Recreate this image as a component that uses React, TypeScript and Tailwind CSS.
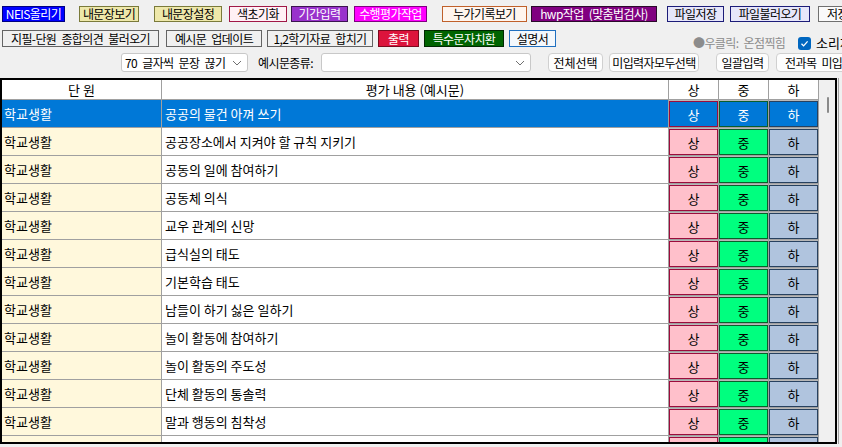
import React from "react";

const units = [
  "공공의 물건 아껴 쓰기",
  "공공장소에서 지켜야 할 규칙 지키기",
  "공동의 일에 참여하기",
  "공동체 의식",
  "교우 관계의 신망",
  "급식실의 태도",
  "기본학습 태도",
  "남들이 하기 싫은 일하기",
  "놀이 활동에 참여하기",
  "놀이 활동의 주도성",
  "단체 활동의 통솔력",
  "말과 행동의 침착성",
  "모둠 활동의 협동성",
];

function Btn({ className, children }: { className: string; children: React.ReactNode }) {
  return (
    <div
      className={`shrink-0 flex items-center justify-center whitespace-nowrap overflow-hidden border leading-none ${className}`}
    >
      {children}
    </div>
  );
}

function Chevron() {
  return (
    <svg width="10" height="6" viewBox="0 0 10 6" className="shrink-0">
      <path d="M1 1 L5 5 L9 1" fill="none" stroke="#707070" strokeWidth="1" />
    </svg>
  );
}

function GradeCell({ label, selected, tone }: { label: string; selected: boolean; tone: "hi" | "mid" | "lo" }) {
  const base =
    tone === "hi"
      ? selected
        ? "bg-[#0078d7] border-[#9c0c3c] text-white"
        : "bg-[#ffc0cb] border-[#9c0c3c] text-black"
      : tone === "mid"
        ? selected
          ? "bg-[#0078d7] border-[#0b5e2b] text-white"
          : "bg-[#00ff7f] border-[#0b5e2b] text-black"
        : selected
          ? "bg-[#0078d7] border-[#27415f] text-white"
          : "bg-[#b0c4de] border-[#27415f] text-black";
  return (
    <div className="w-[50px] h-full shrink-0 border-r border-[#a0a0a0] bg-[#b8b8b8] pt-[1px]">
      <div className={`w-[49px] h-[26px] border flex items-center justify-center ${base}`}>{label}</div>
    </div>
  );
}

export default function App() {
  return (
    <div className="w-[842px] h-[447px] overflow-hidden bg-[#f0f0f0] font-['Noto_Sans_CJK_KR','Noto_Sans',sans-serif] text-black">
      {/* toolbar row 1 */}
      <div className="flex h-[22px] pt-[6px] text-[12px] tracking-[-0.6px] [word-spacing:3px]">
        <Btn className="ml-[2px] w-[63px] h-[16px] bg-[#0000ff] border-[#000080] text-white">NEIS올리기</Btn>
        <Btn className="ml-[14px] w-[60px] h-[16px] bg-[#eee8aa] border-[#7a7a3a]">내문장보기</Btn>
        <Btn className="ml-[15px] w-[68px] h-[16px] bg-[#eee8aa] border-[#7a7a3a]">내문장설정</Btn>
        <Btn className="ml-[7px] w-[58px] h-[16px] bg-[#fff0f5] border-[#a01846]">색초기화</Btn>
        <Btn className="ml-[4px] w-[57px] h-[16px] bg-[#9932cc] border-[#3c1450] text-white">기간입력</Btn>
        <Btn className="ml-[6px] w-[73px] h-[16px] bg-[#ff00ff] border-[#800080] text-white">수행평가작업</Btn>
        <Btn className="ml-[15px] w-[85px] h-[16px] bg-[#fff5ee] border-[#c0602a]">누가기록보기</Btn>
        <Btn className="ml-[4px] w-[126px] h-[16px] bg-[#800080] border-[#2a0a2a] text-white">hwp작업 (맞춤법검사)</Btn>
        <Btn className="ml-[10px] w-[57px] h-[16px] bg-[#e6e6fa] border-[#1c1c78]">파일저장</Btn>
        <Btn className="ml-[6px] w-[80px] h-[16px] bg-[#e6e6fa] border-[#1c1c78]">파일불러오기</Btn>
        <Btn className="ml-[8px] w-[60px] h-[16px] bg-[#fafafa] border-[#707070] justify-start pl-[8px]">저장하기</Btn>
      </div>

      {/* toolbar row 2 */}
      <div className="flex mt-[8px] h-[23px] items-start text-[12px] tracking-[-0.6px] [word-spacing:3px]">
        <Btn className="ml-[2px] w-[157px] h-[17px] bg-[#f0f0f0] border-[#646464]">지필-단원 종합의견 불러오기</Btn>
        <Btn className="ml-[7px] w-[96px] h-[17px] bg-[#f0f0f0] border-[#646464]">예시문 업데이트</Btn>
        <Btn className="ml-[5px] w-[106px] h-[17px] bg-[#f0f0f0] border-[#646464]">1,2학기자료 합치기</Btn>
        <Btn className="ml-[5px] w-[41px] h-[17px] bg-[#dc143c] border-[#7a0a1e] text-white">출력</Btn>
        <Btn className="ml-[5px] w-[80px] h-[17px] bg-[#006400] border-[#002800] text-white">특수문자치환</Btn>
        <Btn className="ml-[5px] w-[47px] h-[17px] bg-[#f4f8fc] border-[#2070c0]">설명서</Btn>
        <div className="ml-[137px] mt-[6px] w-[105px] shrink-0 whitespace-nowrap text-[12px] leading-[14px] text-[#8c8c8c]">
          ●우클릭: 온점찍힘
        </div>
        <div className="mt-[7px] w-[13px] h-[13px] shrink-0 rounded-[3px] bg-[#0067c0] flex items-center justify-center">
          <svg width="11" height="11" viewBox="0 0 11 11">
            <path d="M2.5 5.8 L4.6 7.9 L8.6 3.4" fill="none" stroke="#ffffff" strokeWidth="1.3" />
          </svg>
        </div>
        <div className="ml-[5px] mt-[5px] shrink-0 whitespace-nowrap text-[13px] tracking-normal leading-[16px]">소리재생</div>
      </div>

      {/* toolbar row 3 */}
      <div className="flex h-[19px] items-start text-[12px] tracking-[-0.6px] [word-spacing:3px]">
        <div className="ml-[121px] w-[127px] h-[19px] shrink-0 bg-white border border-[#c8c8c8] rounded-[3px] flex items-center justify-between pl-[3px] pr-[5px] whitespace-nowrap leading-none">
          <span>70 글자씩 문장 끊기</span>
          <Chevron />
        </div>
        <div className="ml-[10px] w-[58px] h-[19px] shrink-0 flex items-center whitespace-nowrap leading-none">예시문종류:</div>
        <div className="ml-[5px] w-[210px] h-[19px] shrink-0 bg-white border border-[#c8c8c8] rounded-[3px] flex items-center justify-end pr-[5px]">
          <Chevron />
        </div>
        <Btn className="ml-[17px] w-[55px] h-[19px] rounded-[4px] bg-[#fdfdfd] border-[#d0d0d0] tracking-normal">전체선택</Btn>
        <Btn className="ml-[6px] w-[90px] h-[19px] rounded-[4px] bg-[#fdfdfd] border-[#d0d0d0]">미입력자모두선택</Btn>
        <Btn className="ml-[17px] w-[53px] h-[19px] rounded-[4px] bg-[#fdfdfd] border-[#d0d0d0]">일괄입력</Btn>
        <Btn className="ml-[7px] w-[80px] h-[19px] rounded-[4px] bg-[#fdfdfd] border-[#d0d0d0] justify-start pl-[8px]">전과목 미입력</Btn>
      </div>

      {/* grid */}
      <div className="flex mt-[6px] items-start">
        <div className="w-[837px] h-[366px] shrink-0 border-2 border-black flex overflow-hidden bg-white">
          <div className="w-[817px] shrink-0 flex flex-col text-[13px]">
            <div className="flex h-[20px] shrink-0 border-b border-[#a0a0a0] bg-white leading-none">
              <div className="w-[160px] shrink-0 border-r border-[#a0a0a0] flex items-center justify-center">단 원</div>
              <div className="w-[507px] shrink-0 border-r border-[#a0a0a0] flex items-center justify-center">평가 내용 (예시문)</div>
              <div className="w-[50px] shrink-0 border-r border-[#a0a0a0] flex items-center justify-center">상</div>
              <div className="w-[50px] shrink-0 border-r border-[#a0a0a0] flex items-center justify-center">중</div>
              <div className="w-[50px] shrink-0 border-r border-[#a0a0a0] flex items-center justify-center">하</div>
            </div>
            {units.map((text, i) => {
              const sel = i === 0;
              return (
                <div key={i} className="flex h-[28px] shrink-0 border-b border-[#a0a0a0] leading-none whitespace-nowrap">
                  <div
                    className={`w-[160px] shrink-0 border-r border-[#a0a0a0] flex items-center pl-[2px] ${
                      sel ? "bg-[#0078d7] text-white" : "bg-[#fff8dc]"
                    }`}
                  >
                    학교생활
                  </div>
                  <div
                    className={`w-[507px] shrink-0 border-r border-[#a0a0a0] flex items-center pl-[3px] ${
                      sel ? "bg-[#0078d7] text-white" : "bg-white"
                    }`}
                  >
                    {text}
                  </div>
                  <GradeCell label="상" selected={sel} tone="hi" />
                  <GradeCell label="중" selected={sel} tone="mid" />
                  <GradeCell label="하" selected={sel} tone="lo" />
                </div>
              );
            })}
          </div>
          <div className="w-[16px] shrink-0 bg-[#f0f0f0] pt-[17px] pl-[8px]">
            <div className="w-[2px] h-[16px] rounded-full bg-[#8a8a8a]" />
          </div>
        </div>
        <div className="ml-[1px] w-px h-[366px] shrink-0 bg-[#a0a0a0]" />
      </div>
    </div>
  );
}
